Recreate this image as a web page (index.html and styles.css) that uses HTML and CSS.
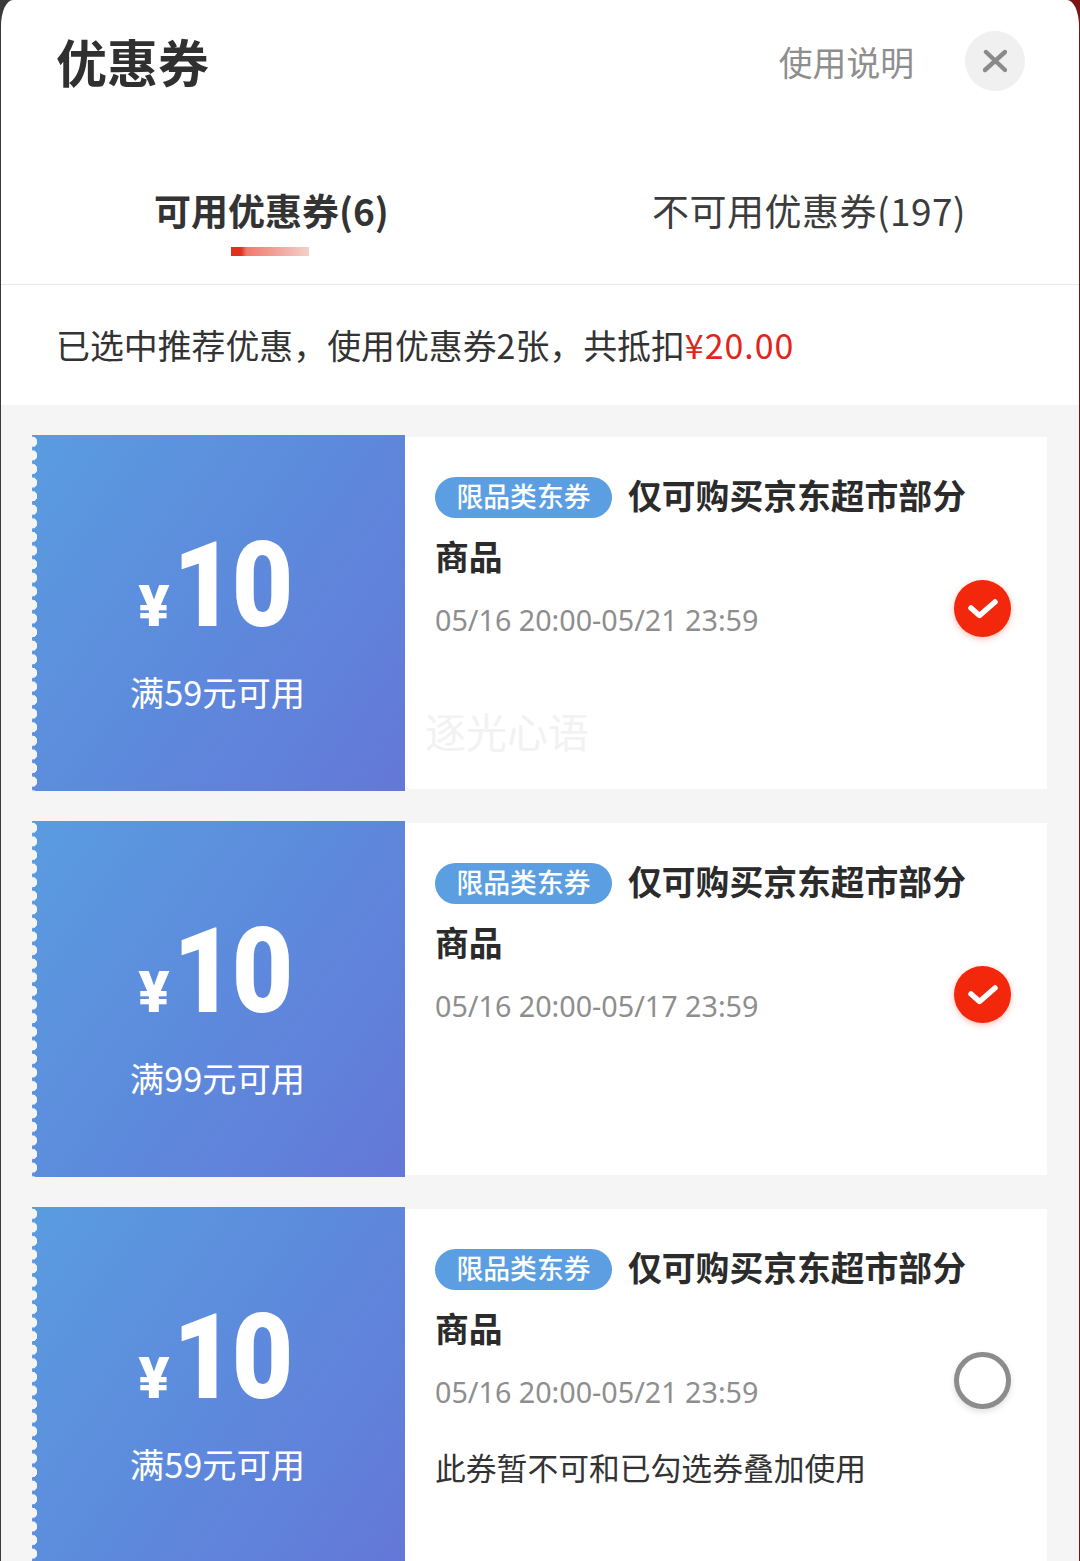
FILE: index.html
```html
<!DOCTYPE html>
<html lang="zh-CN">
<head>
    <meta charset="UTF-8">
    <meta name="viewport" content="width=device-width, initial-scale=1.0">
    <title>优惠券</title>
    <link rel="stylesheet" href="styles.css">
</head>
<body>
<div class="sheet">
    <header class="top">
        <h1>优惠券</h1>
        <span class="help">使用说明</span>
        <button class="close" aria-label="关闭">
            <svg viewBox="0 0 24 24" width="24" height="24"><path d="M2 21L22 3M3 3L22 21" fill="none" stroke="#8a8a8a" stroke-width="4.4" stroke-linecap="round"/></svg>
        </button>
    </header>
    <nav class="tabs">
        <div class="tab tab-on">可用优惠券(6)<i class="tab-line"></i></div>
        <div class="tab tab-off">不可用优惠券(197)</div>
    </nav>
    <div class="summary">已选中推荐优惠，使用优惠券2张，共抵扣<em>¥20.00</em></div>
    <main class="list">
        <section class="coupon">
            <div class="stub">
                <div class="amount"><span class="yen">¥</span><span class="num">10</span></div>
                <div class="limit">满59元可用</div>
            </div>
            <div class="info">
                <div class="text">
                    <div class="name"><span class="badge">限品类东券</span><span>仅可购买京东超市部分</span></div>
                    <div class="name">商品</div>
                    <p class="date">05/16 20:00-05/21 23:59</p>
                </div>
                <span class="check check-on"><svg viewBox="0 0 32 24" width="32" height="24"><path d="M4 12L12.500 19.500L28 6" fill="none" stroke="#fff" stroke-width="5.500" stroke-linecap="round" stroke-linejoin="round"/></svg></span>
                <span class="mark">逐光心语</span>
            </div>
        </section>
        <section class="coupon">
            <div class="stub">
                <div class="amount"><span class="yen">¥</span><span class="num">10</span></div>
                <div class="limit">满99元可用</div>
            </div>
            <div class="info">
                <div class="text">
                    <div class="name"><span class="badge">限品类东券</span><span>仅可购买京东超市部分</span></div>
                    <div class="name">商品</div>
                    <p class="date">05/16 20:00-05/17 23:59</p>
                </div>
                <span class="check check-on"><svg viewBox="0 0 32 24" width="32" height="24"><path d="M4 12L12.500 19.500L28 6" fill="none" stroke="#fff" stroke-width="5.500" stroke-linecap="round" stroke-linejoin="round"/></svg></span>
            </div>
        </section>
        <section class="coupon">
            <div class="stub">
                <div class="amount"><span class="yen">¥</span><span class="num">10</span></div>
                <div class="limit">满59元可用</div>
            </div>
            <div class="info">
                <div class="text">
                    <div class="name"><span class="badge">限品类东券</span><span>仅可购买京东超市部分</span></div>
                    <div class="name">商品</div>
                    <p class="date">05/16 20:00-05/21 23:59</p>
                    <p class="note">此券暂不可和已勾选券叠加使用</p>
                </div>
                <span class="check check-off"></span>
            </div>
        </section>
    </main>
</div>
</body>
</html>
```

FILE: styles.css
```css
html, body {
    margin: 0;
    padding: 0;
    height: 1561px;
    overflow: hidden;
}

body {
    font-family: "Noto Sans CJK SC", "Noto Sans", sans-serif;
    background: linear-gradient(90deg, #3a3a3a 50%, #7c1414 50%);
    color: #2b2b2b;
}

.sheet {
    margin: 0 1px;
    height: 1561px;
    background: #fff;
    border-top-left-radius: 12px 26px;
    border-top-right-radius: 12px 26px;
    overflow: hidden;
}

.top {
    display: flex;
    align-items: center;
    height: 122px;
    padding: 0 54px 0 55px;
}

.top h1 {
    flex: 1;
    margin: 0;
    font-size: 51px;
    font-weight: 700;
    line-height: 130px;
    color: #303030;
}

.help {
    font-size: 33.800px;
    color: #8e8e8e;
    margin-right: 51px;
}

.close {
    display: flex;
    align-items: center;
    justify-content: center;
    width: 60px;
    height: 60px;
    padding: 0;
    border: none;
    border-radius: 50%;
    background: #f0f0f0;
}

.tabs {
    display: flex;
    height: 162px;
    border-bottom: 1px solid #e8e8e8;
    padding-left: 153px;
    font-size: 37px;
}

.tab {
    position: relative;
    height: 100%;
    line-height: 176px;
    letter-spacing: 0.5px;
}

.tab-on {
    font-weight: 700;
    color: #333;
    width: 498px;
    letter-spacing: 0;
}

.tab-off {
    color: #3c3c3c;
}

.tab-line {
    position: absolute;
    left: 77px;
    top: 125px;
    width: 78px;
    height: 9px;
    background: linear-gradient(90deg, #e0301e 0, #e0301e 10px, #f07a6c 20%, #f3d0cb 100%);
}

.summary {
    height: 120px;
    padding-left: 55px;
    font-size: 33.900px;
    line-height: 120px;
    color: #333;
}

.summary em {
    font-style: normal;
    letter-spacing: 1px;
    color: #e1251b;
}

.list {
    display: flex;
    flex-direction: column;
    gap: 30px;
    height: 1156px;
    padding: 30px 32px 0 31px;
    background: #f5f5f5;
}

.coupon {
    display: flex;
    flex: none;
    height: 356px;
}

.stub {
    position: relative;
    display: flex;
    flex-direction: column;
    align-items: center;
    flex: none;
    width: 373px;
    color: #fff;
    background: linear-gradient(125deg, #5a9ce0 0%, #5d8adc 50%, #6478d8 100%);
}

/* scallop edge, same colour as the list behind it */
.stub::before {
    content: "";
    position: absolute;
    left: 0;
    top: 0;
    bottom: 0;
    width: 5px;
    background: radial-gradient(circle at 0 50%, #f5f5f5 5px, transparent 5.500px) 0 0 / 5px 13.600px repeat-y;
}

.amount {
    display: flex;
    align-items: baseline;
    margin: 88px 4px 0 0;
    height: 126px;
    line-height: 126px;
}

.yen {
    font-family: "Roboto", sans-serif;
    font-size: 58px;
    font-weight: 900;
    margin-right: 3px;
}

.num {
    display: inline-block;
    font-family: "Roboto", sans-serif;
    font-size: 118px;
    font-weight: 900;
    letter-spacing: -3px;
    width: 122px;
    transform: scaleX(0.9);
    transform-origin: left;
}

.limit {
    margin: 20px 2px 0 0;
    font-size: 34.300px;
    line-height: 44px;
}

.info {
    position: relative;
    display: flex;
    flex: 1;
    margin: 2px 0;
    background: #fff;
}

.text {
    width: 570px;
    padding: 26px 0 0 30px;
    box-sizing: border-box;
}

.name {
    display: flex;
    align-items: center;
    height: 63px;
    font-size: 33.800px;
    font-weight: 700;
    line-height: 63px;
    color: #2b2b2b;
}

.name + .name {
    margin-top: -2px;
}

.badge {
    flex: none;
    width: 177px;
    height: 41px;
    margin: 6px 16px 0 0;
    border-radius: 21px;
    font-size: 26.800px;
    font-weight: 500;
    line-height: 38px;
    text-align: center;
    color: #fff;
    background: #5b9ee2;
}

.date {
    margin: 11px 0 0;
    font-family: "Noto Sans", sans-serif;
    font-size: 28.700px;
    line-height: 44px;
    color: #8e8e8e;
}

.note {
    margin: 31px 0 0;
    font-size: 30.800px;
    line-height: 44px;
    color: #333;
}

.check {
    display: flex;
    align-items: center;
    justify-content: center;
    flex: none;
    align-self: center;
    width: 57px;
    height: 57px;
    margin: 0 0 10px -21px;
    box-sizing: border-box;
    border-radius: 50%;
}

.check-on {
    background: #f2270c;
    box-shadow: 0 2px 6px rgba(242, 39, 12, 0.3);
}

.check-off {
    border: 5px solid #8c8c8c;
    background: #fff;
    box-shadow: 0 3px 6px rgba(0, 0, 0, 0.12);
}

.mark {
    position: absolute;
    left: 20px;
    top: 268px;
    font-size: 41px;
    line-height: 50px;
    color: #f2f2f2;
}
```
